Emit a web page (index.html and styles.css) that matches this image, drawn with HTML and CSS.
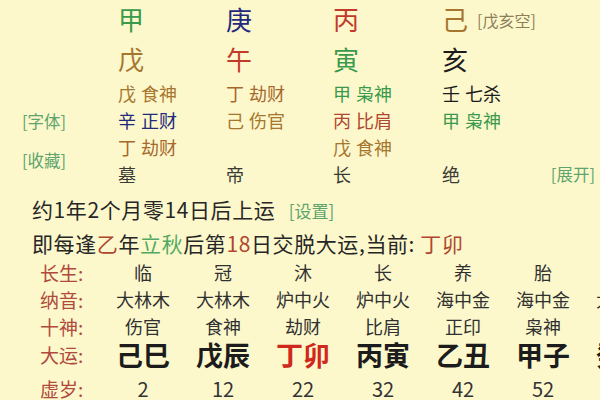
FILE: index.html
```html
<!DOCTYPE html>
<html lang="zh">
<head>
<meta charset="utf-8">
<link rel="stylesheet" href="styles.css">
</head>
<body>
<div class="page">
  <div class="chart">
    <div class="row bigrow r1">
      <div class="side"></div>
      <div class="green">甲</div>
      <div class="navy">庚</div>
      <div class="red">丙</div>
      <div class="brown">己<span class="kong">[戊亥空]</span></div>
      <div></div>
    </div>
    <div class="row bigrow r2">
      <div class="side"></div>
      <div class="brown">戊</div>
      <div class="red">午</div>
      <div class="green">寅</div>
      <div class="black">亥</div>
      <div></div>
    </div>
    <div class="row smrow">
      <div class="side"></div>
      <div class="brown">戊 食神</div>
      <div class="brown2">丁 劫财</div>
      <div class="green">甲 枭神</div>
      <div class="black">壬 七杀</div>
      <div></div>
    </div>
    <div class="row smrow">
      <div class="side"><span class="btn">[字体]</span></div>
      <div class="navy">辛 正财</div>
      <div class="brown">己 伤官</div>
      <div class="red2">丙 比肩</div>
      <div class="green">甲 枭神</div>
      <div></div>
    </div>
    <div class="row smrow">
      <div class="side low"><span class="btn">[收藏]</span></div>
      <div class="brown2">丁 劫财</div>
      <div></div>
      <div class="brown">戊 食神</div>
      <div></div>
      <div></div>
    </div>
    <div class="row smrow">
      <div class="side"></div>
      <div class="dark">墓</div>
      <div class="dark">帝</div>
      <div class="dark">长</div>
      <div class="dark">绝</div>
      <div class="expand"><span class="btn">[展开]</span></div>
    </div>
  </div>

  <div class="info">
    <p class="line">约1年2个月零14日后上运 <span class="btn set">[设置]</span></p>
    <p class="line">即每逢<span class="red2">乙</span>年<span class="lgreen">立秋</span>后第<span class="red2">18</span>日交脱大运,当前: <span class="red2">丁卯</span></p>
  </div>

  <div class="yun">
    <div class="yrow">
      <div class="lbl">长生:</div>
      <div>临</div><div>冠</div><div>沐</div><div>长</div><div>养</div><div>胎</div><div>绝</div>
    </div>
    <div class="yrow">
      <div class="lbl">纳音:</div>
      <div>大林木</div><div>大林木</div><div>炉中火</div><div>炉中火</div><div>海中金</div><div>海中金</div><div>大海水</div>
    </div>
    <div class="yrow">
      <div class="lbl">十神:</div>
      <div>伤官</div><div>食神</div><div>劫财</div><div>比肩</div><div>正印</div><div>枭神</div><div>正官</div>
    </div>
    <div class="yrow dyrow">
      <div class="lbl">大运:</div>
      <div>己巳</div><div>戊辰</div><div class="cur">丁卯</div><div>丙寅</div><div>乙丑</div><div>甲子</div><div>癸亥</div>
    </div>
    <div class="yrow agerow">
      <div class="lbl">虚岁:</div>
      <div>2</div><div>12</div><div>22</div><div>32</div><div>42</div><div>52</div><div>62</div>
    </div>
  </div>
</div>
</body>
</html>
```

FILE: styles.css
```css
html, body {
  margin: 0;
  padding: 0;
  background: #fcf8cc;
}

body {
  font-family: "Noto Sans CJK SC", "Noto Sans", sans-serif;
  color: #262626;
  width: 600px;
  height: 400px;
  overflow: hidden;
}

.page {
  width: 600px;
  overflow: hidden;
}

.row {
  display: grid;
  grid-template-columns: 118px 108px 107px 109px 100px 1fr;
  white-space: nowrap;
}

.bigrow {
  font-size: 26px;
  align-items: center;
}

.bigrow > div {
  display: flex;
  align-items: center;
}

.r1 { height: 36px; }
.r2 { height: 44px; }

.kong {
  font-size: 16px;
  color: #8e7e5a;
  margin-left: 9px;
  margin-top: 3px;
}

.smrow {
  height: 27px;
  font-size: 18px;
  line-height: 27px;
  word-spacing: 1px;
}

.side {
  padding-left: 22px;
}

.side.low {
  padding-top: 12px;
}

.expand {
  text-align: right;
  padding-right: 5px;
  line-height: 24px;
}

.btn {
  font-size: 16.5px;
  color: #5ea46c;
  word-spacing: 0;
}

.green { color: #3a9a4c; }
.lgreen { color: #52aa62; }
.navy { color: #23297c; }
.red { color: #c23a2c; }
.red2 { color: #b0462e; }
.brown { color: #a6762e; }
.brown2 { color: #a7682c; }
.black { color: #1c1c1c; }
.dark { color: #3a3a34; }

.info {
  margin-top: 5px;
  padding-left: 32px;
}

.line {
  margin: 0;
  font-size: 21px;
  line-height: 32px;
  letter-spacing: 0.6px;
  white-space: nowrap;
  color: #262626;
}

.line .set {
  font-size: 17px;
  margin-left: 8px;
  letter-spacing: 0;
}

.yun {
  padding-left: 40px;
  width: 663px;
}

.yrow {
  display: grid;
  grid-template-columns: 63px repeat(7, 80px);
  height: 27px;
  line-height: 27px;
  font-size: 18px;
  color: #303030;
  white-space: nowrap;
}

.yrow > div {
  text-align: center;
}

.yrow > .lbl {
  text-align: left;
  font-size: 19px;
  color: #b04a3c;
  font-weight: 400;
}

.dyrow {
  height: 30px;
  line-height: 30px;
  font-size: 27px;
  font-weight: 700;
  color: #1c1c1c;
}

.dyrow > .cur { color: #d0281c; }

.agerow {
  height: 38px;
  line-height: 38px;
  font-size: 20px;
  color: #333;
}
```
